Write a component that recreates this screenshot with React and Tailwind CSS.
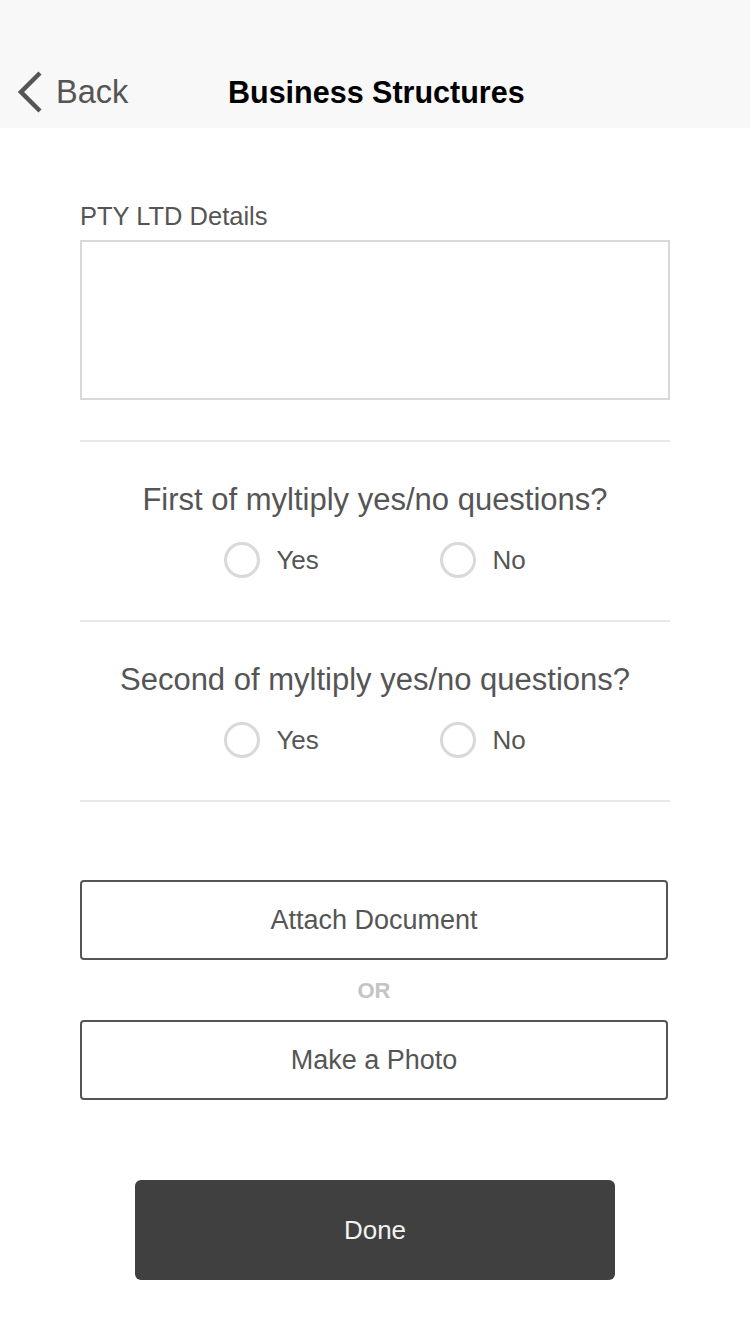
import React from "react";

function Radio({ label, wide }) {
  return (
    <div className={`flex items-center gap-4 ${wide ? "w-[216px]" : ""}`}>
      <div className="w-[36px] h-[36px] rounded-full border-[3px] border-[#d9d9d9] bg-white" />
      <span className="text-[26px] leading-[36px] text-[#555555]">{label}</span>
    </div>
  );
}

function Question({ text }) {
  return (
    <div className="pt-[40px] pb-[42px] border-b-2 border-[#e8e8e8]">
      <div className="text-center text-[31px] leading-[36px] text-[#555555]">{text}</div>
      <div className="mt-[24px] flex justify-center">
        <Radio label="Yes" wide />
        <Radio label="No" />
      </div>
    </div>
  );
}

export default function App() {
  return (
    <div
      className="w-[750px] h-[1334px] bg-white overflow-hidden"
      style={{ fontFamily: '"Liberation Sans", Arial, Helvetica, sans-serif' }}
    >
      <div className="h-[128px] bg-[#f8f8f8] flex items-end">
        <div className="h-[72px] w-full flex items-center">
          <div className="flex items-center pl-[16px] w-[228px]">
            <svg width="28" height="42" viewBox="0 0 28 42" className="mr-[12px]">
              <path d="M24 2 L5 21 L24 40" fill="none" stroke="#555555" strokeWidth="4.5" strokeLinecap="butt" strokeLinejoin="miter" />
            </svg>
            <span className="text-[32.5px] leading-[40px] text-[#555555]">Back</span>
          </div>
          <span className="text-[30.5px] leading-[40px] font-bold text-black">Business Structures</span>
        </div>
      </div>

      <div className="px-[80px]">
        <div className="pt-[73px] text-[25.5px] leading-[30px] text-[#555555]">PTY LTD Details</div>
        <div className="mt-[9px] h-[160px] border-2 border-[#d9d9d9] bg-white" />
        <div className="mt-[40px] border-b-2 border-[#e8e8e8]" />
        <Question text="First of myltiply yes/no questions?" />
        <Question text="Second of myltiply yes/no questions?" />

        <div className="mt-[78px] w-[588px]">
          <div className="h-[80px] border-2 border-[#555555] rounded-[4px] flex items-center justify-center text-[27px] text-[#555555]">
            Attach Document
          </div>
          <div className="h-[60px] flex items-center justify-center text-[22px] font-bold text-[#c4c4c4]">OR</div>
          <div className="h-[80px] border-2 border-[#555555] rounded-[4px] flex items-center justify-center text-[27px] text-[#555555]">
            Make a Photo
          </div>
        </div>
      </div>

      <div className="mt-[80px] flex justify-center">
        <div className="w-[480px] h-[100px] bg-[#404040] rounded-[6px] flex items-center justify-center text-[26px] text-[#f2f2f2]">
          Done
        </div>
      </div>
    </div>
  );
}
